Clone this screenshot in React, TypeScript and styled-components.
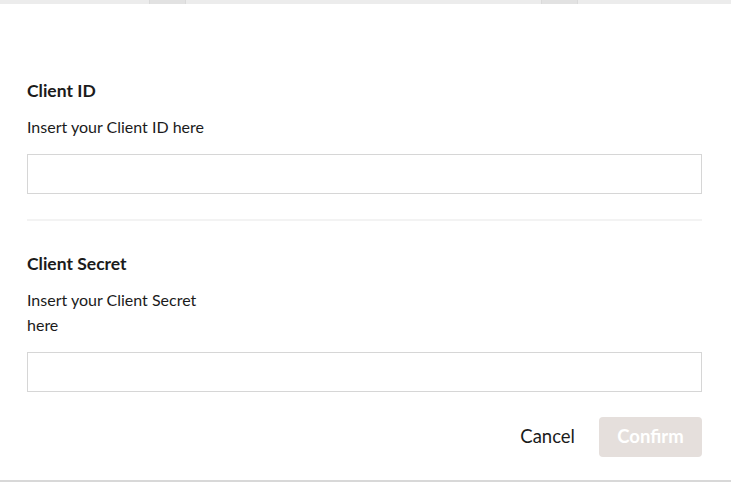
import React from "react";
import styled, { createGlobalStyle } from "styled-components";

const Global = createGlobalStyle`
  html, body { margin: 0; padding: 0; background: #ffffff; }
  body { font-family: Lato, "Noto Sans", sans-serif; color: #1b1b1b; }
  * { box-sizing: border-box; }
`;

const Page = styled.div`
  width: 731px;
  height: 482px;
  display: flex;
  flex-direction: column;
  background: #fff;
  border-bottom: 2px solid #d8d8d8;
`;

const TopStrip = styled.div`
  height: 4px;
  background: #ececec;
  display: flex;
`;

const StripTab = styled.div<{ $left: number }>`
  margin-left: ${(p) => p.$left}px;
  width: 37px;
  height: 4px;
  background: #e2e2e2;
  border-left: 1px solid #dadada;
  border-right: 1px solid #dadada;
`;

const Form = styled.div`
  padding: 75px 29px 0 27px;
  display: flex;
  flex-direction: column;
`;

const Field = styled.div`
  display: flex;
  flex-direction: column;
`;

const Label = styled.div`
  font-size: 17.5px;
  font-weight: 700;
  line-height: 24px;
  margin-bottom: 11px;
`;

const Description = styled.div`
  font-size: 16px;
  line-height: 25px;
  max-width: 190px;
  margin-bottom: 15px;
`;

const Input = styled.input`
  height: 40px;
  width: 100%;
  border: 1px solid #d6d6d6;
  border-radius: 0;
  padding: 0 12px;
  font-family: inherit;
  font-size: 16px;
  outline: none;
`;

const Divider = styled.div`
  height: 2px;
  background: #f3f3f3;
  margin: 25px 0 31px;
`;

const Footer = styled.div`
  display: flex;
  justify-content: flex-end;
  align-items: center;
  gap: 12px;
  margin-top: 25px;
`;

const TextButton = styled.button`
  background: none;
  border: none;
  padding: 0 12px 3px;
  height: 40px;
  font-family: inherit;
  font-size: 18.5px;
  color: #1b1b1b;
  cursor: pointer;
`;

const PrimaryButton = styled.button`
  height: 40px;
  width: 103px;
  border: none;
  border-radius: 4px;
  padding: 0 0 3px;
  background: #e5dfdc;
  color: #ffffff;
  font-family: inherit;
  font-size: 18.5px;
  font-weight: 700;
  cursor: default;
`;

export default function App() {
  return (
    <>
      <Global />
      <Page>
        <TopStrip>
          <StripTab $left={149} />
          <StripTab $left={355} />
        </TopStrip>
        <Form>
          <Field>
            <Label>Client ID</Label>
            <Description>Insert your Client ID here</Description>
            <Input type="text" />
          </Field>
          <Divider />
          <Field>
            <Label>Client Secret</Label>
            <Description>Insert your Client Secret here</Description>
            <Input type="text" />
          </Field>
          <Footer>
            <TextButton>Cancel</TextButton>
            <PrimaryButton disabled>Confirm</PrimaryButton>
          </Footer>
        </Form>
      </Page>
    </>
  );
}
